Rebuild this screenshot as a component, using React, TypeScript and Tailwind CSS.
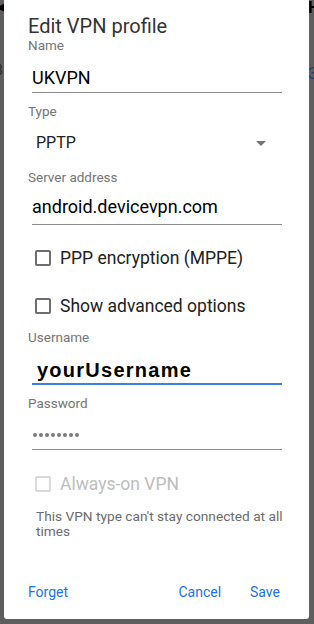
const label = "text-[13.5px] leading-[17px] text-[#757575]"

function Checkbox({ text, disabled }: { text: string; disabled?: boolean }) {
  return (
    <div className="flex items-center h-[20px] pl-[7px]">
      <span
        className={
          "w-[16px] h-[16px] rounded-[2px] border-2 " +
          (disabled ? "border-[#dadada]" : "border-[#6e6e6e]")
        }
      />
      <span
        className={
          "ml-[9px] text-[17.5px] leading-[20px] " +
          (disabled ? "text-[#bdbdbd]" : "text-[#212121]")
        }
      >
        {text}
      </span>
    </div>
  )
}

export default function App() {
  return (
    <main
      className="relative w-[314px] h-[624px] overflow-hidden bg-[#5e5e5e] flex pl-[4px]"
      style={{ fontFamily: "Roboto, 'Noto Sans', sans-serif" }}
    >
      {/* bits of the screen behind the dim */}
      <span className="absolute left-[-4px] top-[-3px] text-[13px] text-black">◀</span>
      <span className="absolute left-[-5px] top-[60px] text-[14px] text-[#2a2a2a]">3</span>
      <span className="absolute left-[308px] top-[-5px] text-[17px] font-bold text-black">H</span>
      <span className="absolute left-[308px] top-[61px] text-[17px] text-[#1c3f7a]">3</span>

      <div className="relative w-[305px] h-[619px] bg-white rounded-b-[3px] flex flex-col pl-[24px]">
        <h1 className="mt-[15px] text-[20px] leading-[22px] text-[#333333]">Edit VPN profile</h1>

        <div className="text-[13.5px] leading-[16px] text-[#757575]">Name</div>
        <div className="mt-[13px] pl-[4px] pr-[27px]">
          <div className="text-[18px] leading-[24px] text-black">UKVPN</div>
          <div className="mt-[2px] h-[1px] bg-[#8c8c8c]" />
        </div>

        <div className={"mt-[10px] " + label}>Type</div>
        <div className="mt-[13px] h-[20px] flex items-center pl-[8px] pr-[43px]">
          <span className="text-[16px] leading-[20px] text-[#212121]">PPTP</span>
          <svg className="ml-auto" width="10" height="5" viewBox="0 0 10 5">
            <path d="M0 0h10L5 5z" fill="#757575" />
          </svg>
        </div>

        <div className={"mt-[16px] " + label}>Server address</div>
        <div className="mt-[9px] pl-[4px] pr-[27px]">
          <div className="text-[18px] leading-[24px] text-black">android.devicevpn.com</div>
          <div className="mt-[5px] h-[1px] bg-[#8c8c8c]" />
        </div>

        <div className="mt-[23px]">
          <Checkbox text="PPP encryption (MPPE)" />
        </div>
        <div className="mt-[28px]">
          <Checkbox text="Show advanced options" />
        </div>

        <div className={"mt-[13px] " + label}>Username</div>
        <div className="mt-[12px] pl-[4px] pr-[27px]">
          <div
            className="pl-[5px] text-[20px] leading-[24px] font-bold tracking-[1.25px] text-black"
            style={{ fontFamily: "'Liberation Sans', Arial, sans-serif" }}
          >
            yourUsername
          </div>
          <div className="mt-[1px] h-[2px] bg-[#3d7fe6]" />
        </div>

        <div className={"mt-[10px] " + label}>Password</div>
        <div className="mt-[11px] pl-[5px] pr-[27px]">
          <div className="h-[24px] flex items-center gap-[2px]">
            {Array.from({ length: 8 }).map((_, i) => (
              <span key={i} className="w-[4px] h-[4px] rounded-full bg-[#7a7a7a]" />
            ))}
          </div>
          <div className="mt-[2px] ml-[-1px] h-[1px] bg-[#8c8c8c]" />
        </div>

        <div className="mt-[24px]">
          <Checkbox text="Always-on VPN" disabled />
        </div>

        <p className="mt-[15px] ml-[8px] w-[254px] text-[13.7px] leading-[15px] text-[#6b6b6b]">
          This VPN type can't stay connected at all times
        </p>

        <div className="mt-auto mb-[17px] flex items-center pr-[29px] text-[14px] leading-[20px] text-[#1a73e8]">
          <span>Forget</span>
          <span className="ml-auto">Cancel</span>
          <span className="ml-[29px]">Save</span>
        </div>
      </div>
    </main>
  )
}
